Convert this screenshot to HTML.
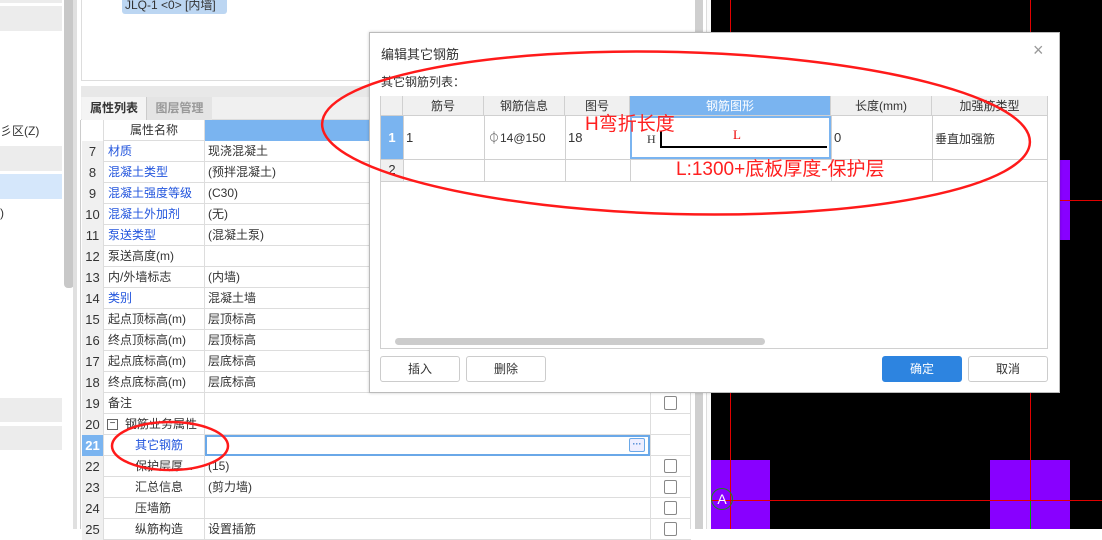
<!DOCTYPE html>
<html><head><meta charset="utf-8"><style>
*{margin:0;padding:0;box-sizing:border-box}
body{width:1102px;height:529px;overflow:hidden;position:relative;background:#fff;font-family:"Liberation Sans","Noto Sans CJK SC",sans-serif;font-size:12px;color:#333}
.a{position:absolute}
.row{position:absolute;left:82px;width:609px;height:21px;border-bottom:1px solid #ddd}
.row .n{position:absolute;left:0;width:22px;height:21px;background:#f0f0f0;border-right:1px solid #ddd;text-align:center;line-height:21px;font-size:13px}
.row .k{position:absolute;left:26px;line-height:21px;font-size:12px}
.row .v{position:absolute;left:126px;line-height:21px;font-size:12px}
.row .c{position:absolute;left:122px;top:0;width:1px;height:21px;background:#ddd}
.row .c2{position:absolute;left:568px;top:0;width:1px;height:21px;background:#ddd}
.cb{position:absolute;left:582px;top:3px;width:13px;height:14px;border:1px solid #888;border-radius:2px;background:#fff}
.bl{color:#2255dd}
.th{position:absolute;top:96px;height:20px;background:#f0f0f0;border-right:1px solid #d0d0d0;border-bottom:1px solid #d0d0d0;text-align:center;line-height:20px;font-size:12px}
.btn{position:absolute;top:356px;height:26px;border:1px solid #ccc;border-radius:3px;text-align:center;line-height:24px;font-size:12px;background:#fff}
</style></head><body>
<!-- left sidebar -->
<div class="a" style="left:0;top:0;width:62px;height:3px;background:#ececec"></div>
<div class="a" style="left:0;top:6px;width:62px;height:25px;background:#ececec"></div>
<div class="a" style="left:0;top:146px;width:62px;height:25px;background:#ececec"></div>
<div class="a" style="left:0;top:174px;width:62px;height:25px;background:#d5e7fb"></div>
<div class="a" style="left:0;top:398px;width:62px;height:24px;background:#ececec"></div>
<div class="a" style="left:0;top:426px;width:62px;height:24px;background:#ececec"></div>
<div class="a" style="left:0;top:122px;font-size:12px">彡区(Z)</div>
<div class="a" style="left:0;top:206px;font-size:12px">)</div>
<div class="a" style="left:64px;top:0;width:10px;height:288px;background:#c8c8c8;border-radius:0 0 4px 4px"></div>
<div class="a" style="left:73px;top:0;width:4px;height:529px;background:#e0e0e0"></div>
<!-- top box -->
<div class="a" style="left:81px;top:0;width:630px;height:81px;border:1px solid #ddd;border-top:none"></div>
<div class="a" style="left:122px;top:0;width:105px;height:14px;background:#bcd6f2;border-radius:0 0 3px 3px;font-size:12px;line-height:10px;padding-left:3px">JLQ-1 &lt;0&gt; [内墙]</div>
<div class="a" style="left:81px;top:86px;width:630px;height:11px;background:#e8e8e8"></div>
<div class="a" style="left:81px;top:97px;width:630px;height:23px;background:#f0f0f0;border-bottom:1px solid #ddd"></div>
<div class="a" style="left:82px;top:97px;width:65px;height:23px;background:#f4f4f4;border-right:1px solid #ccc;font-weight:bold;text-align:center;line-height:23px;font-size:12px">属性列表</div>
<div class="a" style="left:147px;top:97px;width:65px;height:23px;background:#e4e4e4;color:#999;font-weight:bold;text-align:center;line-height:23px;font-size:12px">图层管理</div>
<div class="a" style="left:80px;top:120px;width:1px;height:409px;background:#ccc"></div>
<!-- header row -->
<div class="row" style="top:120px"><div class="n" style="background:#fff"></div><div class="c"></div><div class="k" style="left:48px">属性名称</div><div class="a" style="left:123px;top:0;width:486px;height:21px;background:#7ab4f0"></div></div>
<div class="row" style="top:141px"><div class="n">7</div><div class="c"></div><div class="c2"></div><div class="k bl">材质</div><div class="v">现浇混凝土</div></div>
<div class="row" style="top:162px"><div class="n">8</div><div class="c"></div><div class="c2"></div><div class="k bl">混凝土类型</div><div class="v">(预拌混凝土)</div></div>
<div class="row" style="top:183px"><div class="n">9</div><div class="c"></div><div class="c2"></div><div class="k bl">混凝土强度等级</div><div class="v">(C30)</div></div>
<div class="row" style="top:204px"><div class="n">10</div><div class="c"></div><div class="c2"></div><div class="k bl">混凝土外加剂</div><div class="v">(无)</div></div>
<div class="row" style="top:225px"><div class="n">11</div><div class="c"></div><div class="c2"></div><div class="k bl">泵送类型</div><div class="v">(混凝土泵)</div></div>
<div class="row" style="top:246px"><div class="n">12</div><div class="c"></div><div class="c2"></div><div class="k">泵送高度(m)</div></div>
<div class="row" style="top:267px"><div class="n">13</div><div class="c"></div><div class="c2"></div><div class="k">内/外墙标志</div><div class="v">(内墙)</div></div>
<div class="row" style="top:288px"><div class="n">14</div><div class="c"></div><div class="c2"></div><div class="k bl">类别</div><div class="v">混凝土墙</div></div>
<div class="row" style="top:309px"><div class="n">15</div><div class="c"></div><div class="c2"></div><div class="k">起点顶标高(m)</div><div class="v">层顶标高</div></div>
<div class="row" style="top:330px"><div class="n">16</div><div class="c"></div><div class="c2"></div><div class="k">终点顶标高(m)</div><div class="v">层顶标高</div></div>
<div class="row" style="top:351px"><div class="n">17</div><div class="c"></div><div class="c2"></div><div class="k">起点底标高(m)</div><div class="v">层底标高</div></div>
<div class="row" style="top:372px"><div class="n">18</div><div class="c"></div><div class="c2"></div><div class="k">终点底标高(m)</div><div class="v">层底标高</div></div>
<div class="row" style="top:393px"><div class="n">19</div><div class="c"></div><div class="c2"></div><div class="k">备注</div><div class="cb"></div></div>
<div class="row" style="top:414px"><div class="n">20</div><div class="c"></div><div class="c2"></div><div class="a" style="left:25px;top:5px;width:11px;height:11px;border:1px solid #666;font-size:10px;line-height:8px;text-align:center">−</div><div class="k" style="left:43px">钢筋业务属性</div></div>
<div class="row" style="top:435px"><div class="n" style="background:#7ab4f0;color:#fff;font-weight:bold">21</div><div class="c"></div><div class="c2"></div><div class="k bl" style="left:53px">其它钢筋</div><div class="a" style="left:123px;top:0;width:445px;height:21px;border:2px solid #6aa8e8"></div><div class="a" style="left:547px;top:3px;width:16px;height:14px;border:1px solid #6aa8e8;border-radius:2px;background:#eef;color:#3a7fd0;font-size:9px;line-height:10px;text-align:center;font-weight:bold">···</div></div>
<div class="row" style="top:456px"><div class="n">22</div><div class="c"></div><div class="c2"></div><div class="k" style="left:53px">保护层厚...</div><div class="v">(15)</div><div class="cb"></div></div>
<div class="row" style="top:477px"><div class="n">23</div><div class="c"></div><div class="c2"></div><div class="k" style="left:53px">汇总信息</div><div class="v">(剪力墙)</div><div class="cb"></div></div>
<div class="row" style="top:498px"><div class="n">24</div><div class="c"></div><div class="c2"></div><div class="k" style="left:53px">压墙筋</div><div class="cb"></div></div>
<div class="row" style="top:519px"><div class="n">25</div><div class="c"></div><div class="c2"></div><div class="k" style="left:53px">纵筋构造</div><div class="v">设置插筋</div><div class="cb"></div></div>
<div class="a" style="left:690px;top:120px;width:1px;height:409px;background:#ddd"></div>
<div class="a" style="left:695px;top:0;width:8px;height:529px;background:#cfcfcf"></div>
<div class="a" style="left:706px;top:0;width:5px;height:529px;background:#fafafa;border-left:1px solid #ddd"></div>
<!-- canvas -->
<div class="a" style="left:711px;top:0;width:391px;height:529px;background:#000;overflow:hidden">
<div class="a" style="left:0;top:460px;width:59px;height:69px;background:#8800ff"></div>
<div class="a" style="left:279px;top:460px;width:80px;height:69px;background:#8800ff"></div>
<div class="a" style="left:349px;top:160px;width:10px;height:80px;background:#8800ff"></div>
<div class="a" style="left:19px;top:0;width:1px;height:529px;background:#e00000"></div>
<div class="a" style="left:319px;top:0;width:1px;height:529px;background:#e00000"></div>
<div class="a" style="left:319px;top:500px;width:1px;height:29px;background:#0a0"></div>
<div class="a" style="left:0;top:500px;width:391px;height:1px;background:#e00000"></div>
<div class="a" style="left:349px;top:200px;width:42px;height:1px;background:#e00000"></div>
<div class="a" style="left:0;top:488px;width:22px;height:22px;border:1px solid #1a8a1a;border-radius:50%;color:#fff;font-size:14px;text-align:center;line-height:20px">A</div>
</div>
<!-- dialog -->
<div class="a" style="left:369px;top:32px;width:691px;height:361px;background:#fff;border:1px solid #bbb;box-shadow:0 0 3px rgba(0,0,0,.2)"></div>
<div class="a" style="left:381px;top:44px;font-size:13px;color:#333">编辑其它钢筋</div>
<div class="a" style="left:1033px;top:40px;font-size:18px;color:#999">×</div>
<div class="a" style="left:381px;top:73px;font-size:12px">其它钢筋列表：</div>
<div class="a" style="left:380px;top:96px;width:668px;height:253px;border:1px solid #d0d0d0"></div>
<div class="th" style="left:381px;width:22px"></div>
<div class="th" style="left:403px;width:81px">筋号</div>
<div class="th" style="left:484px;width:81px">钢筋信息</div>
<div class="th" style="left:565px;width:65px">图号</div>
<div class="th" style="left:630px;width:201px;background:#7ab4f0;color:#fff">钢筋图形</div>
<div class="th" style="left:831px;width:101px">长度(mm)</div>
<div class="th" style="left:932px;width:116px">加强筋类型</div>
<div class="a" style="left:381px;top:116px;width:22px;height:43px;background:#7ab4f0;color:#fff;font-weight:bold;text-align:center;line-height:43px;font-size:13px">1</div>
<div class="a" style="left:381px;top:159px;width:22px;height:22px;background:#f0f0f0;text-align:center;line-height:22px;font-size:13px">2</div>
<div class="a" style="left:381px;top:159px;width:667px;height:1px;background:#d0d0d0"></div>
<div class="a" style="left:381px;top:181px;width:667px;height:1px;background:#d0d0d0"></div>
<div class="a" style="left:484px;top:116px;width:1px;height:65px;background:#d0d0d0"></div>
<div class="a" style="left:565px;top:116px;width:1px;height:65px;background:#d0d0d0"></div>
<div class="a" style="left:403px;top:116px;width:1px;height:65px;background:#d0d0d0"></div>
<div class="a" style="left:630px;top:116px;width:1px;height:65px;background:#d0d0d0"></div>
<div class="a" style="left:831px;top:116px;width:1px;height:65px;background:#d0d0d0"></div>
<div class="a" style="left:932px;top:116px;width:1px;height:65px;background:#d0d0d0"></div>
<div class="a" style="left:406px;top:130px;font-size:13px">1</div>
<div class="a" style="left:488px;top:129px;font-size:12px">⏀14@150</div>
<div class="a" style="left:568px;top:130px;font-size:13px">18</div>
<div class="a" style="left:630px;top:116px;width:201px;height:43px;border:2px solid #7ab4f0"></div>
<div class="a" style="left:660px;top:131px;width:2px;height:16px;background:#000"></div>
<div class="a" style="left:660px;top:146px;width:167px;height:2px;background:#000"></div>
<div class="a" style="left:647px;top:132px;font-family:'Liberation Serif',serif;font-size:12px">H</div>
<div class="a" style="left:733px;top:127px;font-family:'Liberation Serif',serif;font-size:13px;color:#e00">L</div>
<div class="a" style="left:834px;top:130px;font-size:13px">0</div>
<div class="a" style="left:935px;top:130px;font-size:12px">垂直加强筋</div>
<div class="a" style="left:395px;top:338px;width:370px;height:7px;background:#ccc;border-radius:4px"></div>
<div class="btn" style="left:380px;width:80px">插入</div>
<div class="btn" style="left:466px;width:80px">删除</div>
<div class="btn" style="left:882px;width:80px;background:#2d84e0;border-color:#2d84e0;color:#fff">确定</div>
<div class="btn" style="left:968px;width:80px">取消</div>
<!-- annotations -->
<div class="a" style="left:585px;top:114px;font-size:19px;color:#ff2020;line-height:22px">H弯折长度</div>
<div class="a" style="left:676px;top:159px;font-size:19px;color:#ff2020;line-height:22px">L:1300+底板厚度-保护层</div>
<svg class="a" style="left:0;top:0" width="1102" height="529"><ellipse cx="676" cy="133" rx="354" ry="81" fill="none" stroke="#ff1a1a" stroke-width="2.5" transform="rotate(1.5 676 133)"/><ellipse cx="170" cy="446" rx="58" ry="24" fill="none" stroke="#ff1a1a" stroke-width="2.5"/></svg>
</body></html>
